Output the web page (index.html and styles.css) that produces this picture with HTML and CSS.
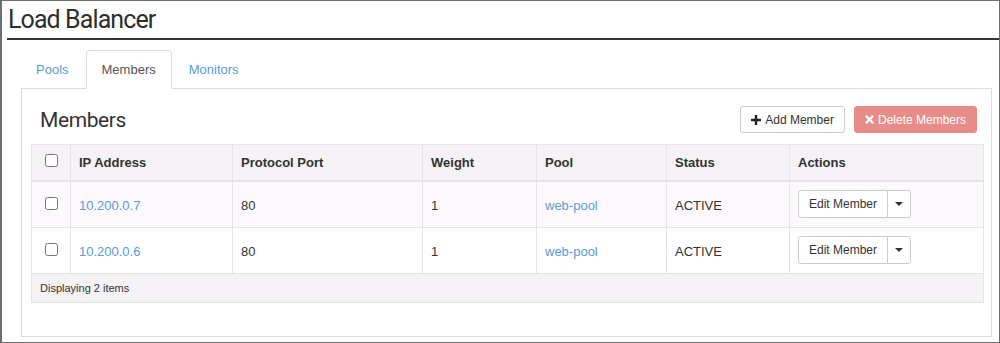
FILE: index.html
```html
<!DOCTYPE html>
<html lang="en">
<head>
    <meta charset="UTF-8">
    <title>Load Balancer</title>
    <link rel="stylesheet" href="styles.css">
</head>
<body>
<div class="frame">
    <h1 class="page-title">Load Balancer</h1>

    <ul class="nav-tabs">
        <li><a href="#">Pools</a></li>
        <li class="active"><a href="#">Members</a></li>
        <li><a href="#">Monitors</a></li>
    </ul>

    <div class="tab-content">
        <div class="table-heading">
            <h3>Members</h3>
            <div class="table-actions">
                <button class="btn btn-default" type="button">
                    <svg width="10" height="10" viewBox="0 0 10 10"><path d="M3.8 0h2.4v3.8H10v2.4H6.2V10H3.8V6.2H0V3.8h3.8z" fill="#222"/></svg>
                    Add Member
                </button>
                <button class="btn btn-danger" type="button">
                    <svg width="9" height="9" viewBox="0 0 10 10"><path d="M1.8 0L5 3.2 8.2 0 10 1.8 6.8 5 10 8.2 8.2 10 5 6.8 1.8 10 0 8.2 3.2 5 0 1.8z" fill="#fff"/></svg>
                    Delete Members
                </button>
            </div>
        </div>

        <table class="data-table">
            <thead>
                <tr>
                    <th class="col-check"><input type="checkbox"></th>
                    <th class="col-ip">IP Address</th>
                    <th class="col-port">Protocol Port</th>
                    <th class="col-weight">Weight</th>
                    <th class="col-pool">Pool</th>
                    <th class="col-status">Status</th>
                    <th>Actions</th>
                </tr>
            </thead>
            <tbody>
                <tr class="odd">
                    <td class="col-check"><input type="checkbox"></td>
                    <td><a href="#">10.200.0.7</a></td>
                    <td>80</td>
                    <td>1</td>
                    <td><a href="#">web-pool</a></td>
                    <td>ACTIVE</td>
                    <td class="col-actions">
                        <div class="btn-group">
                            <button class="btn btn-default btn-sm" type="button">Edit Member</button>
                            <button class="btn btn-default btn-sm caret-btn" type="button"><span class="caret"></span></button>
                        </div>
                    </td>
                </tr>
                <tr>
                    <td class="col-check"><input type="checkbox"></td>
                    <td><a href="#">10.200.0.6</a></td>
                    <td>80</td>
                    <td>1</td>
                    <td><a href="#">web-pool</a></td>
                    <td>ACTIVE</td>
                    <td class="col-actions">
                        <div class="btn-group">
                            <button class="btn btn-default btn-sm" type="button">Edit Member</button>
                            <button class="btn btn-default btn-sm caret-btn" type="button"><span class="caret"></span></button>
                        </div>
                    </td>
                </tr>
            </tbody>
            <tfoot>
                <tr>
                    <td colspan="7">Displaying 2 items</td>
                </tr>
            </tfoot>
        </table>
    </div>
</div>
</body>
</html>
```

FILE: styles.css
```css
html, body {
    margin: 0;
    padding: 0;
    background: #fff;
}

body {
    font-family: "Liberation Sans", Arial, sans-serif;
    font-size: 13px;
    color: #333;
}

.frame {
    height: 343px;
    box-sizing: border-box;
    border: 1px solid #6e6e6e;
    border-left-width: 2px;
    padding-left: 5px;
    overflow: hidden;
}

.page-title {
    margin: 0;
    padding-left: 1px;
    font-family: Roboto, sans-serif;
    font-weight: 400;
    font-size: 25px;
    letter-spacing: -0.9px;
    line-height: 37px;
    color: #2e2e2e;
    border-bottom: 2px solid #333;
}

.nav-tabs {
    list-style: none;
    margin: 10px 0 0 13px;
    padding: 0;
    display: flex;
}

.nav-tabs li {
    margin-right: 1px;
    margin-bottom: -1px;
}

.nav-tabs a {
    display: block;
    padding: 10px 15px;
    line-height: 17px;
    border: 1px solid transparent;
    border-radius: 4px 4px 0 0;
    color: #5a9bd3;
    text-decoration: none;
}

.nav-tabs .active a {
    color: #555;
    background: #fff;
    border-color: #ddd;
    border-bottom-color: #fff;
}

.tab-content {
    margin: 0 7px 0 14px;
    height: 249px;
    box-sizing: border-box;
    border: 1px solid #ddd;
    padding: 0 7px 0 9px;
}

.table-heading {
    display: flex;
    justify-content: space-between;
    align-items: center;
    padding: 17px 7px 11px 9px;
}

.table-heading h3 {
    margin: 0;
    font-family: Roboto, sans-serif;
    font-weight: 400;
    font-size: 21px;
    letter-spacing: -0.4px;
    color: #333;
}

.table-actions {
    display: flex;
    gap: 9px;
}

.btn {
    font-family: "Liberation Sans", Arial, sans-serif;
    font-size: 12px;
    height: 27px;
    padding: 0 10px;
    border-radius: 3px;
    border: 1px solid #ccc;
    background: #fff;
    color: #333;
    display: inline-flex;
    align-items: center;
    gap: 4px;
}

.btn-danger {
    background: #e88c8a;
    border-color: #e88c8a;
    color: #fff;
}

.data-table {
    width: 100%;
    border-collapse: collapse;
    border: 1px solid #e6e3e6;
}

.data-table th,
.data-table td {
    border: 1px solid #e6e3e6;
    text-align: left;
    padding: 0 8px;
}

.data-table thead th {
    background: #f4f2f4;
    height: 35px;
    font-weight: bold;
    border-bottom-width: 2px;
}

.data-table tbody td {
    height: 43px;
    padding-top: 1px;
}

.data-table tbody td.col-actions {
    padding-top: 0;
    padding-bottom: 2px;
}

.data-table tbody tr.odd td {
    background: #fcf9fc;
}

.data-table tfoot td {
    background: #f4f2f4;
    height: 28px;
    font-size: 11px;
}

.data-table a {
    color: #5a9bd3;
    text-decoration: none;
}

.col-check {
    width: 22px;
    text-align: center !important;
}

.col-check input {
    margin: 0 0 4px 0;
    width: 13px;
    height: 13px;
    vertical-align: middle;
}

.col-ip { width: 145px; }
.col-port { width: 173px; }
.col-weight { width: 97px; }
.col-pool { width: 113px; }
.col-status { width: 106px; }

.btn-group {
    display: inline-flex;
}

.btn-sm {
    height: 28px;
    padding: 0 10px;
}

.btn-group .btn:first-child {
    border-radius: 3px 0 0 3px;
}

.btn-group .caret-btn {
    border-radius: 0 3px 3px 0;
    padding: 0 7px;
    margin-left: -1px;
}

.caret {
    display: inline-block;
    width: 0;
    height: 0;
    border-top: 4px solid #333;
    border-left: 4px solid transparent;
    border-right: 4px solid transparent;
}
```
